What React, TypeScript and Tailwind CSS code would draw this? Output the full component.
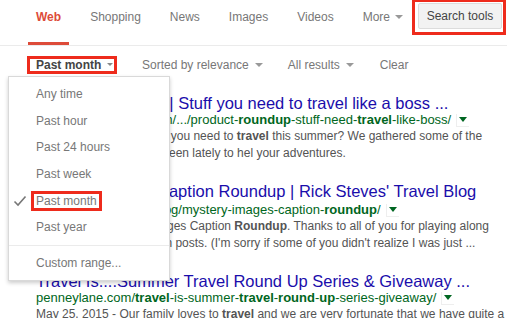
import React from "react";

const UrlArrow = () => (
  <span className="inline-flex items-center justify-center w-[13px] h-[13px] ml-[5px] align-middle border-l border-b border-[#eeeeee]">
    <span className="inline-block w-0 h-0 border-l-[4px] border-r-[4px] border-t-[5px] border-l-transparent border-r-transparent border-t-[#006621]" />
  </span>
);

export default function App() {
  return (
    <div className="relative w-[507px] h-[318px] overflow-hidden bg-white font-['Liberation_Sans',Arial,sans-serif]">
      {/* top nav */}
      <div className="flex h-[46px] border-b border-[#ebebeb] pl-[28px] text-[12px] leading-[14px] text-[#777]">
        <div className="h-[45px] px-2 pt-[10px] border-b-[3px] border-[#dd4b39] font-bold text-[#dd4b39]">Web</div>
        <div className="px-2 pt-[10px] ml-[13px]">Shopping</div>
        <div className="px-2 pt-[10px] ml-[13px]">News</div>
        <div className="px-2 pt-[10px] ml-[13px]">Images</div>
        <div className="px-2 pt-[10px] ml-[13px]">Videos</div>
        <div className="px-2 pt-[10px] ml-[13px] flex items-start">
          More
          <span className="inline-block w-0 h-0 border-l-[4px] border-r-[4px] border-t-[4px] border-l-transparent border-r-transparent border-t-[#999] ml-[5px] mt-[5px]" />
        </div>
        <div className="ml-auto mr-[1px] w-[94px] h-[35px] border-[3px] border-t-[2px] border-[#ee2b1c] pl-[3px] pr-[1px] pt-[1px]">
          <div className="h-[26px] rounded-[2px] border border-[#dcdcdc] bg-[#f2f2f2] flex items-center justify-center text-[#444]">
            Search tools
          </div>
        </div>
      </div>

      {/* filter row */}
      <div className="flex items-center h-[37px] pl-[27px] text-[12px] leading-[14px] text-[#777]">
        <div className="w-[90px] h-[18px] border-[3px] border-[#ee2b1c] pl-[6px] flex items-center font-bold text-[#444]">
          Past month
          <span className="inline-block w-0 h-0 border-l-[3px] border-r-[3px] border-t-[3px] border-l-transparent border-r-transparent border-t-[#888] ml-[6px]" />
        </div>
        <div className="ml-[25px] flex items-center">
          Sorted by relevance
          <span className="inline-block w-0 h-0 border-l-[4px] border-r-[4px] border-t-[4px] border-l-transparent border-r-transparent border-t-[#999] ml-[6px]" />
        </div>
        <div className="ml-[25px] flex items-center">
          All results
          <span className="inline-block w-0 h-0 border-l-[4px] border-r-[4px] border-t-[4px] border-l-transparent border-r-transparent border-t-[#999] ml-[6px]" />
        </div>
        <div className="ml-[26px]">Clear</div>
      </div>

      {/* results */}
      <div className="pl-[36px] pt-[11px] whitespace-nowrap">
        <div>
          <div className="text-[16.5px] leading-[18px] text-[#1a0dab]">Travel Round–Up | Stuff you need to travel like a boss ...</div>
          <div className="text-[13px] leading-[16px] text-[#006621] flex items-center">
            <span>
              www.thetravelbites.com/.../product-<b>roundup</b>-stuff-need-<b>travel</b>-like-boss/
            </span>
            <UrlArrow />
          </div>
          <div className="text-[12px] leading-[16.5px] text-[#545454]">
            <div>June 12, 2015 - What do you need to <b>travel</b> this summer? We gathered some of the</div>
            <div>the coolest items we've seen lately to hel your adventures.</div>
          </div>
        </div>
        <div className="mt-[21px]">
          <div className="text-[16.5px] leading-[18px] text-[#1a0dab]">Mystery Images Caption Roundup | Rick Steves' Travel Blog</div>
          <div className="text-[13px] leading-[16px] text-[#006621] flex items-center mt-[2px]">
            <span>
              blog.ricksteves.com/blog/mystery-images-caption-<b>roundup</b>/
            </span>
            <UrlArrow />
          </div>
          <div className="text-[12px] leading-[16.5px] text-[#545454]">
            <div>This week's Mystery Images Caption <b>Roundup</b>. Thanks to all of you for playing along</div>
            <div>with all our recent caption posts. (I'm sorry if some of you didn't realize I was just ...</div>
          </div>
        </div>
        <div className="mt-[21px]">
          <div className="text-[16.5px] leading-[18px] text-[#1a0dab]">Travel Is....Summer Travel Round Up Series &amp; Giveaway ...</div>
          <div className="text-[13px] leading-[16px] text-[#006621] flex items-center">
            <span>
              penneylane.com/<b>travel</b>-is-summer-<b>travel</b>-<b>round</b>-<b>up</b>-series-giveaway/
            </span>
            <UrlArrow />
          </div>
          <div className="text-[12px] leading-[16.5px] text-[#545454]">
            <div>May 25, 2015 - Our family loves to <b>travel</b> and we are very fortunate that we have quite a</div>
          </div>
        </div>
      </div>

      {/* dropdown menu */}
      <div className="absolute left-[8px] top-[76px] w-[162px] h-[205px] bg-white border border-[#d9d9d9] shadow-[0_2px_4px_rgba(0,0,0,0.2)] pt-[4px] text-[12px] leading-[14px] text-[#777]">
        {["Any time", "Past hour", "Past 24 hours", "Past week"].map((t) => (
          <div key={t} className="h-[26.6px] flex items-center pl-[27px]">{t}</div>
        ))}
        <div className="relative h-[26.6px] flex items-center pl-[27px]">
          <svg className="absolute left-[4px] top-[7px]" width="14" height="14" viewBox="0 0 14 14">
            <path d="M1.5 7.5 L5 11 L12.5 2.5" fill="none" stroke="#777" strokeWidth="1.6" />
          </svg>
          <span className="-ml-[5px] border-[3px] border-[#ee2b1c] px-[2px] h-[20px] flex items-center">Past month</span>
        </div>
        <div className="h-[26.6px] flex items-center pl-[27px]">Past year</div>
        <div className="mt-[4px] h-px bg-[#ebebeb]" />
        <div className="mt-[4px] h-[26px] flex items-center pl-[27px]">Custom range...</div>
      </div>
    </div>
  );
}
